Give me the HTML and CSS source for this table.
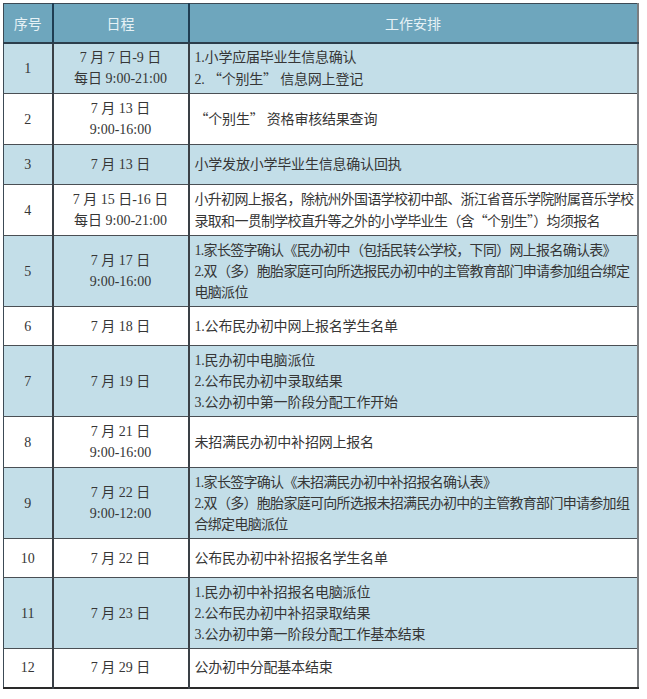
FILE: index.html
```html
<!DOCTYPE html>
<html lang="zh-CN">
<head>
<meta charset="utf-8">
<title>小升初日程安排</title>
<link rel="stylesheet" href="styles.css">
</head>
<body>
<table class="schedule">
  <colgroup>
    <col class="c-no">
    <col class="c-date">
    <col class="c-work">
  </colgroup>
  <thead>
    <tr class="h39">
      <th>序号</th>
      <th>日程</th>
      <th>工作安排</th>
    </tr>
  </thead>
  <tbody>
    <tr class="blue h51">
      <td class="no">1</td>
      <td class="date">7 月 7 日-9 日<br>每日 9:00-21:00</td>
      <td class="work">1.小学应届毕业生信息确认<br>2. <span class="q">“个别生”</span> 信息网上登记</td>
    </tr>
    <tr class="h51">
      <td class="no">2</td>
      <td class="date">7 月 13 日<br>9:00-16:00</td>
      <td class="work"><span class="q">“个别生”</span> 资格审核结果查询</td>
    </tr>
    <tr class="blue h40">
      <td class="no">3</td>
      <td class="date">7 月 13 日</td>
      <td class="work">小学发放小学毕业生信息确认回执</td>
    </tr>
    <tr class="h51">
      <td class="no">4</td>
      <td class="date">7 月 15 日-16 日<br>每日 9:00-21:00</td>
      <td class="work tight">小升初网上报名，除杭州外国语学校初中部、浙江省音乐学院附属音乐学校<br>录取和一贯制学校直升等之外的小学毕业生（含<span class="q">“个别生”</span>）均须报名</td>
    </tr>
    <tr class="blue h71">
      <td class="no">5</td>
      <td class="date">7 月 17 日<br>9:00-16:00</td>
      <td class="work tight">1.家长签字确认《民办初中（包括民转公学校，下同）网上报名确认表》<br>2.双（多）胞胎家庭可向所选报民办初中的主管教育部门申请参加组合绑定<br>电脑派位</td>
    </tr>
    <tr class="h39">
      <td class="no">6</td>
      <td class="date">7 月 18 日</td>
      <td class="work">1.公布民办初中网上报名学生名单</td>
    </tr>
    <tr class="blue h71">
      <td class="no">7</td>
      <td class="date">7 月 19 日</td>
      <td class="work">1.民办初中电脑派位<br>2.公布民办初中录取结果<br>3.公办初中第一阶段分配工作开始</td>
    </tr>
    <tr class="h51">
      <td class="no">8</td>
      <td class="date">7 月 21 日<br>9:00-16:00</td>
      <td class="work">未招满民办初中补招网上报名</td>
    </tr>
    <tr class="blue h71">
      <td class="no">9</td>
      <td class="date">7 月 22 日<br>9:00-12:00</td>
      <td class="work tight">1.家长签字确认《未招满民办初中补招报名确认表》<br>2.双（多）胞胎家庭可向所选报未招满民办初中的主管教育部门申请参加组<br>合绑定电脑派位</td>
    </tr>
    <tr class="h39">
      <td class="no">10</td>
      <td class="date">7 月 22 日</td>
      <td class="work">公布民办初中补招报名学生名单</td>
    </tr>
    <tr class="blue h71">
      <td class="no">11</td>
      <td class="date">7 月 23 日</td>
      <td class="work">1.民办初中补招报名电脑派位<br>2.公布民办初中补招录取结果<br>3.公办初中第一阶段分配工作基本结束</td>
    </tr>
    <tr class="h39">
      <td class="no">12</td>
      <td class="date">7 月 29 日</td>
      <td class="work">公办初中分配基本结束</td>
    </tr>
  </tbody>
</table>
</body>
</html>
```
FILE: styles.css
```css
html, body {
  margin: 0;
  padding: 0;
  background: #ffffff;
}

body {
  padding: 3px 0 0 3px;
  font-family: "Liberation Serif", "Noto Sans CJK SC", serif;
  font-size: 14px;
  color: #363636;
}

.schedule {
  border-collapse: collapse;
  width: 634px;
  table-layout: fixed;
  border-top: 1px solid #3c4a55;
  border-left: 1px solid #3c4a55;
  border-right: 2px solid #7a7d80;
  border-bottom: 2px solid #2a2a2a;
}

.c-no { width: 49px; }
.c-date { width: 136px; }
.c-work { width: 449px; }

.schedule th {
  background: #6ea6bd;
  color: #e6f2f6;
  font-family: "Noto Sans CJK SC", sans-serif;
  font-weight: normal;
  font-size: 14px;
  text-align: center;
  padding: 0;
  border-left: 2px solid #1f3d52;
  border-bottom: 2px solid #2c3e4c;
}

.schedule th:first-child {
  border-left: none;
}

.schedule td {
  padding: 0;
  line-height: 21px;
  vertical-align: middle;
  border-top: 1px solid #4a4f54;
  border-left: 2px solid #3a4046;
}

.schedule td:first-child {
  border-left: none;
}

.blue td {
  background: #c3dee8;
}

.no,
.date {
  text-align: center;
  white-space: nowrap;
}

.work {
  text-align: left;
  padding-left: 5px !important;
  white-space: nowrap;
  letter-spacing: -0.2px;
}

.tight {
  letter-spacing: -0.7px;
}

.q {
  font-family: "Noto Sans CJK SC", sans-serif;
}

.h39 { height: 39px; }
.h40 { height: 40px; }
.h51 { height: 51px; }
.h71 { height: 71px; }
.h72 { height: 72px; }
```
